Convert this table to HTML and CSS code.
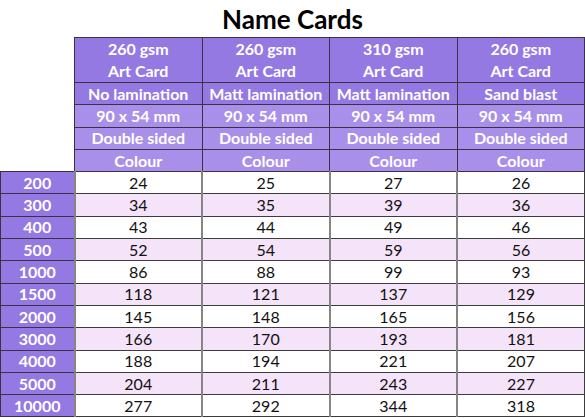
FILE: index.html
```html
<!DOCTYPE html>
<html>
<head>
<meta charset="utf-8">
<link rel="stylesheet" href="styles.css">
</head>
<body>
<h1 class="title">Name Cards</h1>
<table class="prices">
  <colgroup>
    <col class="c-qty"><col class="c-p"><col class="c-p"><col class="c-p"><col class="c-p">
  </colgroup>
  <thead>
    <tr class="h-dark h-tall">
      <th class="blank"></th>
      <th>260 gsm<br>Art Card</th>
      <th>260 gsm<br>Art Card</th>
      <th>310 gsm<br>Art Card</th>
      <th>260 gsm<br>Art Card</th>
    </tr>
    <tr class="h-dark">
      <th class="blank"></th>
      <th>No lamination</th>
      <th>Matt lamination</th>
      <th>Matt lamination</th>
      <th>Sand blast</th>
    </tr>
    <tr class="h-light">
      <th class="blank"></th>
      <th>90 x 54 mm</th><th>90 x 54 mm</th><th>90 x 54 mm</th><th>90 x 54 mm</th>
    </tr>
    <tr class="h-light">
      <th class="blank"></th>
      <th>Double sided</th><th>Double sided</th><th>Double sided</th><th>Double sided</th>
    </tr>
    <tr class="h-light">
      <th class="blank"></th>
      <th>Colour</th><th>Colour</th><th>Colour</th><th>Colour</th>
    </tr>
  </thead>
  <tbody>
    <tr><th>200</th><td>24</td><td>25</td><td>27</td><td>26</td></tr>
    <tr class="alt"><th>300</th><td>34</td><td>35</td><td>39</td><td>36</td></tr>
    <tr><th>400</th><td>43</td><td>44</td><td>49</td><td>46</td></tr>
    <tr class="alt"><th>500</th><td>52</td><td>54</td><td>59</td><td>56</td></tr>
    <tr><th>1000</th><td>86</td><td>88</td><td>99</td><td>93</td></tr>
    <tr class="alt"><th>1500</th><td>118</td><td>121</td><td>137</td><td>129</td></tr>
    <tr><th>2000</th><td>145</td><td>148</td><td>165</td><td>156</td></tr>
    <tr class="alt"><th>3000</th><td>166</td><td>170</td><td>193</td><td>181</td></tr>
    <tr><th>4000</th><td>188</td><td>194</td><td>221</td><td>207</td></tr>
    <tr class="alt"><th>5000</th><td>204</td><td>211</td><td>243</td><td>227</td></tr>
    <tr><th>10000</th><td>277</td><td>292</td><td>344</td><td>318</td></tr>
  </tbody>
</table>
</body>
</html>
```
FILE: styles.css
```css
html, body {
  margin: 0;
  padding: 0;
  background: #ffffff;
}
body {
  font-family: "Lato", "Open Sans", sans-serif;
  width: 585px;
}
.title {
  margin: 0;
  height: 37px;
  line-height: 38px;
  text-align: center;
  font-size: 26px;
  font-weight: 700;
  color: #000;
}
.prices {
  border-collapse: collapse;
  table-layout: fixed;
  width: 585px;
  font-size: 16px;
}
.c-qty { width: 74px; }
.c-p { width: 127.5px; }
.prices th,
.prices td {
  padding: 0;
  height: 21.3px;
  line-height: 20px;
  text-align: center;
  white-space: nowrap;
}
.prices thead th {
  color: #ffffff;
  font-weight: 700;
  border: 1px solid #3a3145;
}
.prices thead th.blank {
  background: #ffffff;
  border: none;
  border-right: 1px solid #3a3145;
}
.h-tall th {
  height: 44px;
  line-height: 22px;
}
.h-dark th { background: #9479e3; }
.h-light th { background: #a890ea; }
.prices tbody th {
  background: #9479e3;
  color: #ffffff;
  font-weight: 700;
  border: 1px solid #3a3145;
}
.prices tbody td {
  color: #111;
  font-weight: 400;
  background: #ffffff;
  border-top: 1px solid #3c3c3c;
  border-bottom: 1px solid #3c3c3c;
  border-left: 2px solid #858585;
  border-right: 2px solid #858585;
}
.prices tbody tr.alt td {
  background: #f4e3f9;
}
.prices tbody td:last-child {
  border-right: 1px solid #3c3c3c;
}
```
